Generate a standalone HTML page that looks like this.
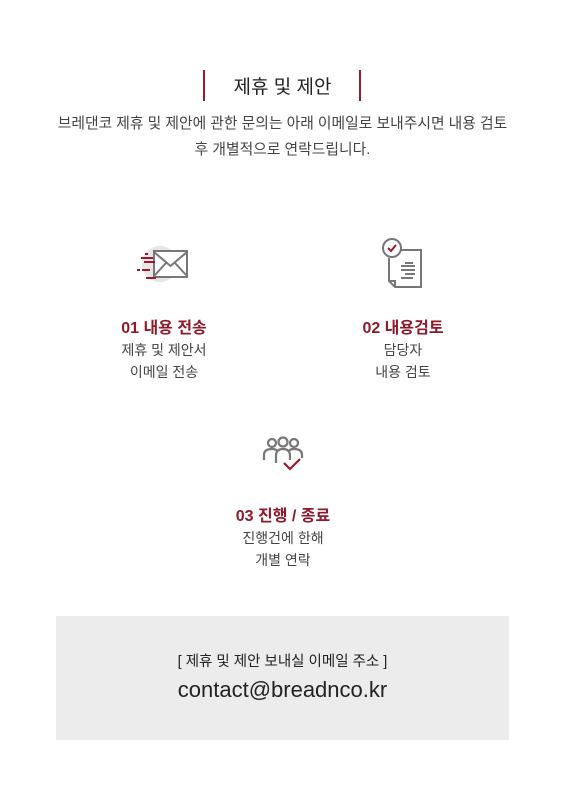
<!DOCTYPE html>
<html><head><meta charset="utf-8"><style>
*{margin:0;padding:0;box-sizing:border-box}
body{width:565px;height:790px;background:#fff;font-family:"Liberation Sans","Noto Sans CJK KR",sans-serif;color:#444;position:relative;overflow:hidden}
.a{position:absolute;text-align:center}
.bar{position:absolute;width:2px;height:31px;background:#9b1b2e;top:70px}
.t{color:#8e1a2c;font-weight:bold;font-size:16px}
.s{font-size:14px;line-height:22px;color:#444}
</style></head><body>
<div class="bar" style="left:203px"></div><div class="bar" style="left:359px"></div>
<div class="a" style="left:0;width:565px;top:72px;font-size:19px;color:#222">제휴 및 제안</div>
<div class="a" style="left:0;width:565px;top:111px;font-size:14.8px;line-height:26px;color:#444">브레댄코 제휴 및 제안에 관한 문의는 아래 이메일로 보내주시면 내용 검토<br>후 개별적으로 연락드립니다.</div>

<svg class="a" style="left:130px;top:240px" width="70" height="50" viewBox="130 240 70 50">
<circle cx="160" cy="264" r="18" fill="#e6e6e6"/>
<rect x="154" y="251" width="33" height="26" fill="#fff" stroke="#777" stroke-width="2"/>
<path d="M154 252 L170.5 266 L187 252 M154 276 L166 263 M187 276 L175 263" fill="none" stroke="#777" stroke-width="2"/>
<g stroke="#9b1b2e" stroke-width="2"><path d="M145 254h3M141 258h12M144 262h11M137 270h3M142 270h8M146 278h10"/></g>
</svg>

<svg class="a" style="left:375px;top:235px" width="55" height="55" viewBox="375 235 55 55">
<path d="M397 250 H421 V287 H395 L389 281 V258" fill="#fff" stroke="#777" stroke-width="2"/>
<path d="M389 281 H395 V287" fill="none" stroke="#777" stroke-width="2"/>
<circle cx="392" cy="248" r="9" fill="#fff" stroke="#777" stroke-width="2"/>
<path d="M388 248 L391 251 L396 245" fill="none" stroke="#9b1b2e" stroke-width="2"/>
<path d="M405 263h8M401 266h14M401 270h14M405 274h10M401 278h12" stroke="#666" stroke-width="1.8"/>
</svg>

<svg class="a" style="left:260px;top:432px" width="50" height="45" viewBox="260 432 50 45">
<g fill="none" stroke="#777" stroke-width="2.2">
<circle cx="272" cy="443" r="4"/><circle cx="283" cy="442" r="4.5"/><circle cx="294" cy="443" r="4"/>
<path d="M264 460 V455 Q264 449 272 449 Q276 449 277 451"/>
<path d="M276 463 V456 Q276 449 283 449 Q290 449 290 456 V460"/>
<path d="M289 451 Q290 449 294 449 Q302 449 302 455 V458"/>
</g>
<path d="M284 463 L290 469 L300 459" fill="none" stroke="#9b1b2e" stroke-width="2.2"/>
</svg>

<div class="a" style="left:64px;width:200px;top:314px"><div class="t">01 내용 전송</div><div class="s" style="margin-top:1px">제휴 및 제안서<br>이메일 전송</div></div>
<div class="a" style="left:303px;width:200px;top:314px"><div class="t">02 내용검토</div><div class="s" style="margin-top:1px">담당자<br>내용 검토</div></div>
<div class="a" style="left:183px;width:200px;top:502px"><div class="t">03 진행 / 종료</div><div class="s" style="margin-top:1px">진행건에 한해<br>개별 연락</div></div>

<div style="position:absolute;left:56px;top:616px;width:453px;height:124px;background:#ececec">
<div class="a" style="left:0;width:453px;top:34px;font-size:14.5px;color:#222">[ 제휴 및 제안 보내실 이메일 주소 ]</div>
<div class="a" style="left:0;width:453px;top:61px;font-size:22px;color:#222">contact@breadnco.kr</div>
</div>
</body></html>
